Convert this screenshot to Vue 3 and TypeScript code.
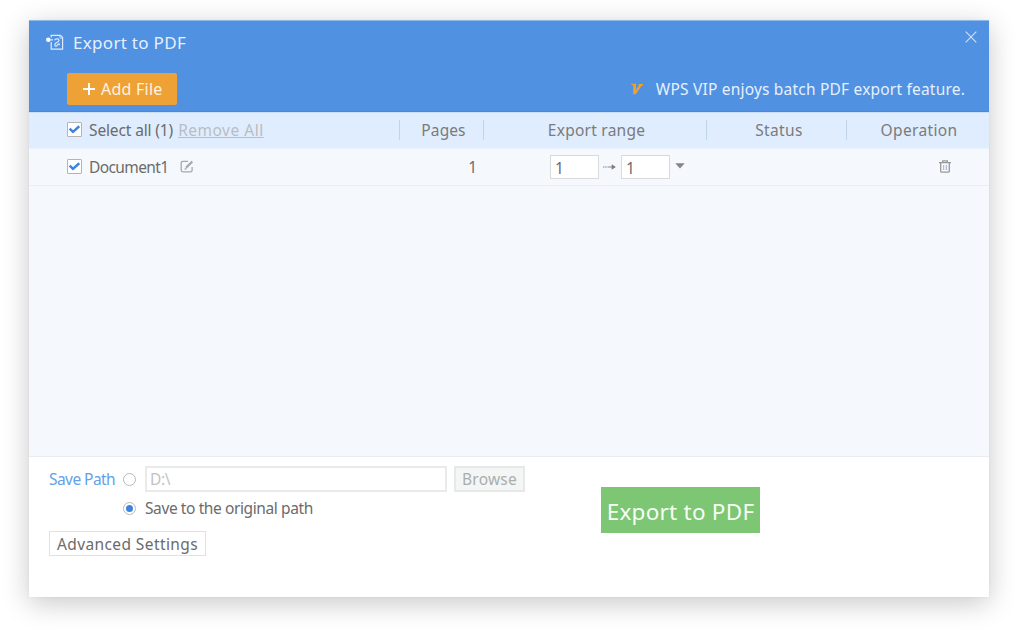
<script setup lang="ts">
import { ref } from 'vue'

interface Column { label: string; name: string }

const columns: Column[] = [
  { label: 'Pages', name: 'pages' },
  { label: 'Export range', name: 'export-range' },
  { label: 'Status', name: 'status' },
  { label: 'Operation', name: 'operations' },
]
const selectAll = ref(true)
const documentSelected = ref(true)
const rangeFrom = ref('1')
const rangeTo = ref('1')
const savePath = ref('D:\\')
const saveMode = ref<'custom' | 'original'>('original')
</script>

<template>
  <div class="page">
    <section class="dialog">
      <header class="banner">
        <div class="title-row">
          <svg class="logo" viewBox="0 0 18 17" fill="none" stroke="#dceafb" stroke-width="1.2">
            <circle cx="2.300" cy="5.800" r="2.300" fill="#fff" stroke="none" />
            <path d="M4 5.800h3M5.200 3.500V1.400h9.300l2.100 2.100v11.700H5.200V8" />
            <path d="M13.900 1.600v2.500h2.500" stroke-width=".8" />
            <path d="M8.600 6.300c.6-1.900 4.400-1.900 4.400.1 0 1.900-2.700 1.700-3.700 3.300-.9 1.500-.4 2.800.9 2.500 1.500-.4 1.300-2.500 2.500-2.400.7.100.8.700.7 1.300" />
          </svg>
          <h1 class="title">Export to PDF</h1>
          <button class="close" aria-label="Close">
            <svg viewBox="0 0 12 12" fill="none" stroke="#d0e2f9" stroke-width="1.1"><path d="M.7.7l10.600 10.600M11.300.7L.7 11.300" /></svg>
          </button>
        </div>
        <div class="action-row">
          <button class="add">
            <svg viewBox="0 0 12 12" stroke="#fff" stroke-width="1.9"><path d="M6 0v12M0 6h12" /></svg>
            <span>Add File</span>
          </button>
          <div class="vip">
            <svg viewBox="0 0 13 12" fill="#f2a02c"><path d="M.2.800h4.900L4.900 7 8 2.500 7.100 2.300 8.200 1h4.300l-.5 1.200-1.200.3L4.600 11.200H2.100L2.300 2.300.6 2.100z" /></svg>
            <span>WPS VIP enjoys batch PDF export feature.</span>
          </div>
        </div>
      </header>

      <div class="grid head">
        <div class="first">
          <button class="check" role="checkbox" :aria-checked="selectAll" @click="selectAll = !selectAll">
            <svg v-if="selectAll" viewBox="0 0 12 12" fill="none" stroke="#3f85dc" stroke-width="2.300"><path d="M1.500 5.100l3.100 3.100L10.400 3" /></svg>
          </button>
          <span class="select-label">Select all (1)</span>
          <a class="remove">Remove All</a>
        </div>
        <div v-for="column in columns" :key="column.name" class="column" :class="column.name"><span>{{ column.label }}</span></div>
      </div>

      <div class="grid row">
        <div class="first">
          <button class="check" role="checkbox" :aria-checked="documentSelected" @click="documentSelected = !documentSelected">
            <svg v-if="documentSelected" viewBox="0 0 12 12" fill="none" stroke="#3f85dc" stroke-width="2.300"><path d="M1.500 5.100l3.100 3.100L10.400 3" /></svg>
          </button>
          <span class="doc-label">Document1</span>
          <svg class="edit" viewBox="0 0 14 13" fill="none" stroke="#a7a9ab" stroke-width="1.300">
            <path d="M8 1.400H3Q1.200 1.400 1.200 3v7Q1.200 11.800 3 11.800h7.500q1.600 0 1.600-1.600V7" />
            <path d="M6 7.800L12.300 1.500" stroke-width="2.300" /><path d="M4.600 9.200l1.900-.6" />
          </svg>
        </div>
        <div class="count">1</div>
        <div class="range">
          <input v-model="rangeFrom" class="page-input" />
          <svg class="arrow" viewBox="0 0 13 8"><path d="M0 4h1.500M2.200 4h1.500M4.500 4H10" stroke="#858585" stroke-width="1.200" /><path d="M8.700 1.200L12.800 4 8.700 6.800z" fill="#7b7b7b" /></svg>
          <input v-model="rangeTo" class="page-input" />
          <svg class="caret" viewBox="0 0 10 6"><path d="M.3.300h9.400L5 5.500z" fill="#858585" /></svg>
        </div>
        <div></div>
        <div class="operation">
          <svg viewBox="0 0 12 13" fill="none" stroke="#989898" stroke-width="1.300">
            <path d="M0 2.600h12M3.700 2.500V.9h4.600v1.600M1.700 3v8q0 1.200 1.200 1.200h6.200q1.200 0 1.200-1.200V3" />
            <path d="M4.600 5v5M7.400 5v5" stroke="#b2bfd0" />
          </svg>
        </div>
      </div>

      <div class="blank"></div>

      <footer class="footer">
        <div class="settings">
          <div class="path-row">
            <span class="save-label">Save Path</span>
            <button class="radio" role="radio" :aria-checked="saveMode === 'custom'" @click="saveMode = 'custom'"><i v-if="saveMode === 'custom'"></i></button>
            <input v-model="savePath" class="path-input" />
            <button class="browse"><span>Browse</span></button>
          </div>
          <div class="original-row">
            <button class="radio" role="radio" :aria-checked="saveMode === 'original'" @click="saveMode = 'original'"><i v-if="saveMode === 'original'"></i></button>
            <span class="original-label">Save to the original path</span>
          </div>
          <button class="advanced"><span>Advanced Settings</span></button>
        </div>
        <button class="export"><span>Export to PDF</span></button>
      </footer>
    </section>
  </div>
</template>

<style>
body { margin: 0; background: #fff; overflow: hidden; }
</style>

<style scoped>
* { box-sizing: border-box; }
.page { width: 1020px; height: 636px; padding: 20px 0 0 29px; background: #fff; font: 15.500px/20px "Noto Sans", "Open Sans", sans-serif; color: #6b6b6b; }
.dialog { width: 960px; height: 577px; background: #fff; display: flex; flex-direction: column; box-shadow: 0 6px 26px rgba(0,0,0,.22), 0 0 2px rgba(0,0,0,.06); }
button { font: inherit; padding: 0; margin: 0; border: 0; background: none; }
input { font: inherit; outline: 0; border-radius: 0; }
svg { display: block; flex: none; }
span, a, h1 { white-space: nowrap; }
.banner { height: 92px; background: #5091e2; border-top: 1px solid #8fb9ec; border-bottom: 1px solid #468ae0; color: #e6f0fc; }
.title-row { height: 44px; display: flex; align-items: center; padding-left: 17px; }
.logo { width: 18px; height: 17px; margin-top: -1px; }
.title { margin: 0 0 0 9px; font-size: 17px; font-weight: 400; line-height: 24px; letter-spacing: .3px; }
.close { margin: -12px 12px 0 auto; width: 12px; height: 12px; }
.close svg { width: 12px; height: 12px; }
.action-row { display: flex; align-items: center; padding: 8px 24px 0 38px; height: 40px; }
.add { width: 110px; height: 32px; background: #eea135; border-radius: 2px; color: #fff3df; display: flex; align-items: center; padding-left: 16px; gap: 6px; font-size: 16px; letter-spacing: .25px; }
.add svg { width: 12px; height: 12px; }
.vip { margin-left: auto; display: flex; align-items: center; gap: 12px; letter-spacing: .2px; }
.vip svg { width: 13px; height: 12px; }
.grid { display: grid; grid-template-columns: 370px 84px 223px 140px 143px; align-items: center; flex: none; }
.head { height: 37px; padding-bottom: 1px; background: #e0edfe; border-bottom: 1px solid #e9f2fd; border-top: 1px solid #c9def9; }
.first { display: flex; align-items: center; padding-left: 38px; }
.check { width: 15px; height: 15px; background: #fff; border: 1px solid #b4b4b4; border-radius: 1px; }
.head .check { margin-top: -1px; }
.row .check { margin-top: -1px; }
.check svg { width: 13px; height: 13px; }
.select-label, .doc-label { margin-left: 7px; }
.select-label { letter-spacing: -.13px; }
.doc-label { letter-spacing: -.6px; }
.remove { margin-left: 5px; color: #b9bdc2; text-decoration: underline; letter-spacing: .5px; }
.column { height: 20px; border-left: 1px solid #c0d5ea; display: flex; justify-content: center; align-items: center; color: #7b7b7b; }
.pages { padding-left: 4px; letter-spacing: .1px; }
.export-range { padding-left: 3px; letter-spacing: .24px; }
.status { padding-left: 5px; letter-spacing: .35px; }
.operations { padding-left: 2px; letter-spacing: .35px; }
.row { height: 37px; background: #f5f9fe; border-bottom: 1px solid #e9eef3; }
.edit { width: 14px; height: 13px; margin: -1px 0 0 11px; }
.count { text-align: right; padding-right: 6px; }
.range { display: flex; align-items: center; padding-left: 67px; }
.page-input { width: 49px; height: 24px; padding: 2px 4px 0; border: 1px solid #d9dbda; background: #fff; color: #6b6b6b; }
.arrow { width: 13px; height: 8px; margin: 0 5px 0 4px; }
.caret { width: 10px; height: 6px; margin: -3px 0 0 5px; }
.operation { display: flex; padding-left: 93px; }
.operation svg { width: 12px; height: 13px; margin-top: -1px; }
.blank { flex: 1; background: #f5f9fe; border-bottom: 1px solid #e9edf2; }
.footer { height: 140px; display: flex; flex: none; background: #fff; }
.settings { width: 572px; padding: 9px 0 0 20px; }
.path-row { height: 26px; display: flex; align-items: center; }
.save-label { width: 66px; margin-right: 8px; color: #64a1e9; letter-spacing: -.55px; }
.radio { width: 13px; height: 13px; border: 1px solid #b5babf; border-radius: 50%; background: #fff; display: flex; align-items: center; justify-content: center; flex: none; }
.radio i { width: 7px; height: 7px; border-radius: 50%; background: #3e83df; }
.path-input { width: 302px; height: 26px; margin-left: 9px; padding: 0 3px; border: 2px solid #e9ebea; color: #c2c4c3; letter-spacing: -.4px; }
.browse { width: 71px; height: 26px; margin-left: 7px; border: 2px solid #e6e9e8; background: #f3f6f5; color: #aaaead; display: flex; align-items: center; justify-content: center; letter-spacing: .2px; }
.original-row { height: 20px; display: flex; align-items: center; margin: 6px 0 0 74px; }
.original-label { margin-left: 9px; letter-spacing: -.4px; }
.advanced { display: flex; align-items: center; justify-content: center; width: 157px; height: 25px; margin-top: 13px; border: 1px solid #dfe4e3; background: #fff; color: #6b6b6b; letter-spacing: .4px; }
.export { width: 159px; height: 46px; margin-top: 30px; background: #7cc674; color: #f6fff4; font-size: 22.500px; line-height: 30px; display: flex; align-items: center; justify-content: center; padding-top: 3px; letter-spacing: .25px; }
</style>
